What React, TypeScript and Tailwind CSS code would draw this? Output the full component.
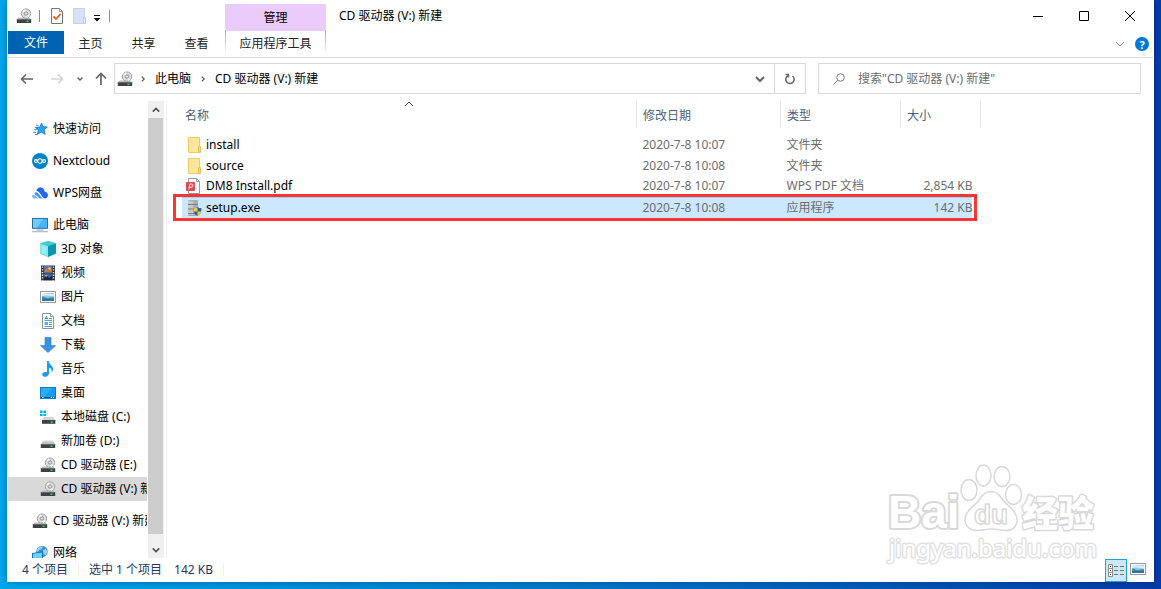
import React from 'react';

type IconProps = { className?: string };

const DriveBody = () => (
  <>
    <path d="M2.5 9.5h11l1.7 2.2H.8z" fill="#b9bbbd" />
    <rect x="0.8" y="11.2" width="14.4" height="3.8" fill="#3e4246" />
    <rect x="0.8" y="11.2" width="14.4" height="0.8" fill="#6b6f73" />
    <rect x="10.5" y="12.6" width="2" height="1.4" fill="#3ee04a" />
  </>
);

const CdDrive = ({ className = '' }: IconProps) => (
  <svg viewBox="0 0 16 16" className={`size-4 shrink-0 ${className}`} aria-hidden="true">
    <DriveBody />
    <circle cx="10" cy="5.6" r="4.7" fill="#dcdee0" stroke="#979a9d" strokeWidth="0.9" />
    <path d="M10 5.6 6.4 3.2A4.3 4.3 0 0 1 9 1.5zM10 5.6l3.6 2.6a4.3 4.3 0 0 1-2.4 1.6z" fill="#f7f7f7" />
    <circle cx="10" cy="5.6" r="1.8" fill="#c4c7ca" stroke="#85888b" strokeWidth="0.7" />
    <circle cx="10" cy="5.6" r="0.7" fill="#fff" />
  </svg>
);

const HardDrive = () => (
  <svg viewBox="0 0 16 16" className="size-4 shrink-0" aria-hidden="true">
    <path d="M3.3 7.5h9.4l2.5 3.6H.8z" fill="#d3d5d7" />
    <DriveBody />
  </svg>
);

const SystemDrive = () => (
  <svg viewBox="0 0 16 16" className="size-4 shrink-0" aria-hidden="true">
    <path d="M0 1.6h2.6v2.3H0zM3.4 1.6H6v2.3H3.4zM0 4.7h2.6V7H0zM3.4 4.7H6V7H3.4z" fill="#00b7ee" />
    <path d="M4 8h9l2.4 3H2z" fill="#d3d5d7" />
    <rect x="2" y="11" width="13.4" height="3.8" fill="#3e4246" />
    <rect x="10.8" y="12.4" width="2" height="1.4" fill="#3ee04a" />
  </svg>
);

const QuickStar = () => (
  <svg viewBox="0 0 16 16" className="size-4 shrink-0" aria-hidden="true">
    <path d="m9.6 2 1.4 3.6 4.3.4-3.2 2.7 1.1 4.6-3.900-2.300-4.200 2.500L6.300 9.500 3.900 6.600l3.900-.6z" fill="#2ea3f0" stroke="#1576c4" strokeWidth="0.8" />
    <path d="M4 4.300h2.500M2.800 6.400h2M2 8.700h3M1 11.300h3M3 13.500h2" stroke="#1b83d6" strokeWidth="0.9" />
  </svg>
);

const NextcloudIcon = () => (
  <svg viewBox="0 0 16 16" className="size-4 shrink-0" aria-hidden="true">
    <circle cx="8" cy="8" r="8" fill="#0082c9" />
    <g fill="none" stroke="#fff" strokeWidth="1.1">
      <circle cx="8" cy="8" r="2.2" />
      <circle cx="3.9" cy="8" r="1.400" />
      <circle cx="12.1" cy="8" r="1.400" />
    </g>
  </svg>
);

const WpsCloud = () => (
  <svg viewBox="0 0 16 16" className="size-4 shrink-0" aria-hidden="true">
    <path d="M4.200 5.800C5 3.500 7 2.100 9 2.400c2.200.3 3.400 2 3.600 4 2 .3 3.400 1.800 3.400 3.600 0 2-1.400 3.400-3.200 3.400-2.800 0-4.200-6.700-8.600-7.600z" fill="#2468ee" />
    <path d="M3.700 7c3.400.7 4.400 4.600 6.800 6.400H7.700C6 12.200 4.600 10.500 2.400 9c.3-.8.800-1.600 1.300-2z" fill="#4b94fa" />
    <path d="M2 9.400c1.700.8 2.500 3 4.200 4H2.700C1.200 13.400 0 12.500 0 11.300c0-1 .9-1.700 2-1.900z" fill="#78b7ff" />
  </svg>
);

const Computer = () => (
  <svg viewBox="0 0 16 16" className="size-4 shrink-0" aria-hidden="true">
    <rect x="0.5" y="1.500" width="15" height="9.800" fill="#47b4fa" stroke="#306f9c" />
    <path d="M1 2h10L5 10.800H1z" fill="#71cafe" />
    <path d="M4.500 13h7" stroke="#8aa5b6" />
    <path d="M0 14.700h16" stroke="#9eb0bd" />
  </svg>
);

const Cube = () => (
  <svg viewBox="0 0 16 16" className="size-4 shrink-0" aria-hidden="true">
    <path d="m8 0 8 2.500v10L8 16l-8-3.500v-10z" fill="#27bdd0" />
    <path d="M0 2.500 8 5v11l-8-3.500z" fill="#89e5e9" />
    <path d="M16 2.500 8 5v11l8-3.500z" fill="#0897ac" />
    <path d="m8 0 8 2.500L8 5 0 2.500z" fill="#43cad7" />
    <path d="m2 4.500 4 1.200v7.500l-4-1.700z" fill="#a9f2ef" opacity="0.6" />
  </svg>
);

const Film = () => (
  <svg viewBox="0 0 16 16" className="size-4 shrink-0" aria-hidden="true">
    <rect x="1" y="0.500" width="14" height="15" fill="#34373b" />
    <rect x="4" y="1" width="8" height="6.500" fill="#5873b9" />
    <rect x="4" y="8.500" width="8" height="6.500" fill="#3563b7" />
    <path d="M5 5.500 7 3l2 2.500 1.500-2 1.500 2V7.500H4z" fill="#ca7936" />
    <circle cx="9.500" cy="3.500" r="1.300" fill="#f2ce3c" />
    <path d="m4 13 3-3 2 3 3-2v4H4z" fill="#152849" />
    <path d="M5 10h3l-2 2z" fill="#e5b943" />
    <path d="M2.500 1.500v14M13.500 1.500v14" stroke="#e9e9e9" strokeWidth="1.400" strokeDasharray="1.300 1.400" />
  </svg>
);

const Picture = ({ className = '' }: IconProps) => (
  <svg viewBox="0 0 16 16" className={`size-4 shrink-0 ${className}`} aria-hidden="true">
    <rect x="0.500" y="2.500" width="15" height="11" fill="#fff" stroke="#969b9f" />
    <rect x="2" y="4" width="12" height="8" fill="#8fc9f5" />
    <path d="m2 4 12 1v2.500L7 6.600 2 7z" fill="#d8efff" />
    <path d="M2 7.500c3 .3 3 1.500 6 1.500 2.500 0 3.500-.7 6-.7V12H2z" fill="#4b8c8c" />
    <path d="M2 10c4-.3 6 .7 12-.6V12H2z" fill="#2f73a5" />
  </svg>
);

const DocumentIcon = () => (
  <svg viewBox="0 0 16 16" className="size-4 shrink-0" aria-hidden="true">
    <path d="M2.500.500h8l3 3v12h-11z" fill="#fff" stroke="#8d9499" />
    <path d="M10.500.500v3h3" fill="#e5e8eb" stroke="#8d9499" />
    <path d="m4.800 6.500 1.500-3.200 1.500 3.200M5.300 5.500h2" fill="none" stroke="#2689d2" strokeWidth="0.900" />
    <path d="M9 5.500h3M4.500 7.500H12M9 9.500h3M9 11.500h3M4.500 13.500H12" stroke="#3f97d3" strokeWidth="0.900" />
    <path d="M4.500 9h3.500v3H4.500z" fill="#66afe0" />
  </svg>
);

const Download = () => (
  <svg viewBox="0 0 16 16" className="size-4 shrink-0" aria-hidden="true">
    <path d="M5 .500h6v8h4.500L8 15.500.500 8.500H5z" fill="#3a92e3" stroke="#2579c8" strokeWidth="0.600" />
  </svg>
);

const Music = () => (
  <svg viewBox="0 0 16 16" className="size-4 shrink-0" aria-hidden="true">
    <path d="M7 0h1.800c0 3.500 4.200 4.200 4.200 8 0 1.400-.6 2.600-1.500 3.700.6-3-.7-4.600-2.500-5.200V12c0 2-1.500 3.700-3.700 3.700-1.800 0-3.100-.9-3.100-2.300 0-1.600 1.800-2.900 4.800-2.400z" fill="#159bf0" />
  </svg>
);

const Desktop = () => (
  <svg viewBox="0 0 16 16" className="size-4 shrink-0" aria-hidden="true">
    <rect x="0.500" y="2.500" width="15" height="11" fill="#169cf5" stroke="#1378c5" />
    <path d="M1 3h11L4 12H1z" fill="#2eacfc" />
    <path d="M1 12.500h14" stroke="#0865a7" />
    <path d="M2 12.500h1.500M11 12.500h1M13 12.500h1" stroke="#fff" />
  </svg>
);

const Network = () => (
  <svg viewBox="0 0 16 16" className="size-4 shrink-0" aria-hidden="true">
    <circle cx="10" cy="6.500" r="5.700" fill="#398fc7" />
    <path d="M6 3c2-2.500 5-2 5-1L9.500 4 7 5l-1 2-1.500-.8zM11 5l3-1 1.500 2.500-2 4-2-1.500z" fill="#91d4f2" />
    <path d="m0 8 11-1.500V15L0 14z" fill="#0878bd" />
    <path d="m1 8.800 9-1.200v6.300l-9-.8z" fill="#6ccfff" />
  </svg>
);

const Folder = () => (
  <svg viewBox="0 0 16 16" className="size-4 shrink-0" aria-hidden="true">
    <path d="M2.500.500h11v15h-11z" fill="#ffe69a" stroke="#edcb62" />
    <path d="M12.500 9.500h2v6h-2z" fill="#fbd873" stroke="#e2b94c" strokeWidth="0.800" />
  </svg>
);

const Pdf = () => (
  <svg viewBox="0 0 16 16" className="size-4 shrink-0" aria-hidden="true">
    <path d="M2.500.500h8l3 3v12h-11z" fill="#fff" stroke="#999" />
    <path d="M10.500.500v3h3" fill="none" stroke="#999" />
    <rect x="0" y="4" width="9" height="9" rx="1" fill="#e14850" />
    <path d="M3 11.500 3.800 6h1.700c2.200 0 1.800 3.200-.3 3.200H3.500" fill="none" stroke="#fff" strokeWidth="1" />
  </svg>
);

const Setup = () => (
  <svg viewBox="0 0 16 16" className="size-4 shrink-0" aria-hidden="true">
    <rect x="2" y="0" width="10" height="16" rx="1" fill="#a9adb0" />
    <path d="M2 1h5v14H2z" fill="#c6c9cb" />
    <path d="M2 4.500h10M2 9h10M2 13.500h10" stroke="#7b8084" strokeWidth="1.200" />
    <path d="M11.500 7c1.200.8 2.400 1.200 4 1.200 0 3.800-1.100 6.300-4 7.600-2.900-1.300-4-3.800-4-7.600 1.600 0 2.800-.4 4-1.200z" fill="#1e65ba" />
    <path d="M11.500 7.600v3.800H7.800c-.3-.9-.4-1.800-.3-3.100 1.600 0 2.800-.3 4-.7zM11.500 11.400h3.700c-.5 2-1.700 3.500-3.700 4.400z" fill="#fbc72c" />
  </svg>
);

const Chevron = ({ className = 'size-[10px]' }: IconProps) => (
  <svg viewBox="0 0 10 10" className={`shrink-0 ${className}`} fill="none" stroke="currentColor" aria-hidden="true">
    <path d="m1 3 4 4 4-4" />
  </svg>
);

type NavItem = { label: string; icon: React.ReactNode; child?: boolean; gap?: boolean; active?: boolean };

const navItems: NavItem[] = [
  { label: '快速访问', icon: <QuickStar /> },
  { label: 'Nextcloud', icon: <NextcloudIcon />, gap: true },
  { label: 'WPS网盘', icon: <WpsCloud />, gap: true },
  { label: '此电脑', icon: <Computer />, gap: true },
  { label: '3D 对象', icon: <Cube />, child: true },
  { label: '视频', icon: <Film />, child: true },
  { label: '图片', icon: <Picture />, child: true },
  { label: '文档', icon: <DocumentIcon />, child: true },
  { label: '下载', icon: <Download />, child: true },
  { label: '音乐', icon: <Music />, child: true },
  { label: '桌面', icon: <Desktop />, child: true },
  { label: '本地磁盘 (C:)', icon: <SystemDrive />, child: true },
  { label: '新加卷 (D:)', icon: <HardDrive />, child: true },
  { label: 'CD 驱动器 (E:)', icon: <CdDrive />, child: true },
  { label: 'CD 驱动器 (V:) 新建', icon: <CdDrive />, child: true, active: true },
  { label: 'CD 驱动器 (V:) 新建', icon: <CdDrive />, gap: true },
  { label: '网络', icon: <Network />, gap: true },
];

const files = [
  { name: 'install', date: '2020-7-8 10:07', type: '文件夹', size: '', icon: <Folder /> },
  { name: 'source', date: '2020-7-8 10:08', type: '文件夹', size: '', icon: <Folder /> },
  { name: 'DM8 Install.pdf', date: '2020-7-8 10:07', type: 'WPS PDF 文档', size: '2,854 KB', icon: <Pdf /> },
  { name: 'setup.exe', date: '2020-7-8 10:08', type: '应用程序', size: '142 KB', icon: <Setup />, selected: true },
];

const TitleBar = () => (
  <header className="flex h-[31px] shrink-0">
    <div className="flex w-[217px] shrink-0 items-center pl-2">
      <CdDrive />
      <span className="ml-[7px] h-3 w-px bg-[#8b8b8b]" />
      <button aria-label="属性" className="ml-[10px]">
        <svg viewBox="0 0 14 16" className="h-4 w-[14px]" aria-hidden="true">
          <path d="M1.500.500h8l3 3v12h-11z" fill="#fff" stroke="#777" />
          <path d="M9.500.500v3h3" fill="none" stroke="#999" />
          <path d="m3.500 8.500 2.500 2.500 4.500-5" fill="none" stroke="#ea5a20" strokeWidth="1.800" />
        </svg>
      </button>
      <button aria-label="新建文件夹" className="ml-2">
        <svg viewBox="0 0 14 16" className="h-4 w-[14px]" aria-hidden="true">
          <path d="M1.500.500h11v15h-11z" fill="#d5e3f4" stroke="#c2d4ea" />
          <path d="M11.500 9.500h2v6h-2z" fill="#deeaf8" stroke="#b9cee7" />
        </svg>
      </button>
      <button aria-label="自定义快速访问工具栏" className="ml-[7px] mt-1">
        <svg viewBox="0 0 8 8" className="size-2" aria-hidden="true">
          <path d="M1 1.500h6" stroke="#111" />
          <path d="M.500 4h7l-3.500 3.500z" fill="#111" />
        </svg>
      </button>
      <span className="ml-2 h-3 w-px bg-[#8b8b8b]" />
    </div>
    <div className="mt-1 flex w-[101px] shrink-0 items-center justify-center bg-[#eacbfc]">管理</div>
    <h1 className="ml-[13px] flex flex-1 items-center">CD 驱动器 (V:) 新建</h1>
    <div className="flex shrink-0">
      <button aria-label="最小化" className="grid w-[46px] place-items-center">
        <svg viewBox="0 0 12 12" className="size-3" stroke="#000" fill="none" aria-hidden="true"><path d="M1 6.500h10" /></svg>
      </button>
      <button aria-label="最大化" className="grid w-[46px] place-items-center">
        <svg viewBox="0 0 12 12" className="size-3" stroke="#000" fill="none" aria-hidden="true"><path d="M1.500 1.500h9v9h-9z" /></svg>
      </button>
      <button aria-label="关闭" className="grid w-[46px] place-items-center">
        <svg viewBox="0 0 12 12" className="size-3" stroke="#000" fill="none" aria-hidden="true"><path d="m1 1 10 10M11 1 1 11" /></svg>
      </button>
    </div>
  </header>
);

const Ribbon = () => (
  <div className="flex h-[27px] shrink-0 items-start border-b border-[#dadbdc] text-[#222]">
    <button className="h-[23px] w-14 bg-[#0063b1] pt-px text-white">文件</button>
    <button className="h-[25px] w-[53px]">主页</button>
    <button className="h-[25px] w-[53px]">共享</button>
    <button className="h-[25px] w-[53px]">查看</button>
    <div className="ml-0.5 flex w-[101px]">
      <span className="h-5 w-px bg-linear-to-b from-[#aaa] to-[#eee]" />
      <button className="h-[25px] flex-1">应用程序工具</button>
      <span className="h-5 w-px bg-linear-to-b from-[#aaa] to-[#eee]" />
    </div>
    <button aria-label="展开功能区" className="mt-2 ml-auto text-[#888]"><Chevron /></button>
    <button aria-label="帮助" className="mt-1.5 mr-1 ml-[10px] grid size-[14px] place-items-center rounded-full bg-[#0078d7] text-[11px] leading-none font-bold text-white">?</button>
  </div>
);

const AddressRow = () => (
  <div className="flex h-[43px] shrink-0 pt-[5px] pb-[7px]">
    <div className="flex w-[106px] shrink-0 items-center text-[#666]">
      <button aria-label="后退" className="ml-3">
        <svg viewBox="0 0 14 14" className="size-[14px]" fill="none" stroke="currentColor" strokeWidth="1.600" aria-hidden="true"><path d="M13 7H1.500M6 2.500 1.500 7 6 11.500" /></svg>
      </button>
      <button aria-label="前进" className="ml-4 text-[#d3d3d3]">
        <svg viewBox="0 0 14 14" className="size-[14px]" fill="none" stroke="currentColor" strokeWidth="1.500" aria-hidden="true"><path d="M1 7h11.500M8 2.500l4.500 4.500L8 11.500" /></svg>
      </button>
      <button aria-label="最近浏览的位置" className="ml-3">
        <svg viewBox="0 0 8 8" className="size-2" fill="none" stroke="currentColor" strokeWidth="1.500" aria-hidden="true"><path d="m1.500 2.500 2.500 2.500 2.500-2.500" /></svg>
      </button>
      <button aria-label="上移" className="ml-[10px]">
        <svg viewBox="0 0 14 14" className="size-[14px]" fill="none" stroke="currentColor" strokeWidth="1.700" aria-hidden="true"><path d="M7 13V1.500M2 6.500l5-5 5 5" /></svg>
      </button>
    </div>
    <div className="flex min-w-0 flex-1 items-center border border-[#d9d9d9] pl-0.5">
      <CdDrive />
      <Chevron className="ml-[7px] size-1.5 -rotate-90 stroke-2 text-[#555]" />
      <button className="ml-[9px] leading-4">此电脑</button>
      <Chevron className="ml-[9px] size-1.5 -rotate-90 stroke-2 text-[#555]" />
      <button className="ml-[9px]">CD 驱动器 (V:) 新建</button>
      <button aria-label="以前的位置" className="mr-[9px] ml-auto text-[#666]"><Chevron className="size-[10px] stroke-2" /></button>
      <button aria-label="刷新" className="grid w-[31px] place-items-center self-stretch border-l border-[#d9d9d9] text-[#666]">
        <svg viewBox="0 0 12 12" className="size-3" fill="none" stroke="currentColor" strokeWidth="1.500" aria-hidden="true">
          <path d="M8.500 3a4.200 4.200 0 1 1-4.800-.2M1.500 1.500h3v3" />
        </svg>
      </button>
    </div>
    <label className="mr-3 ml-3 flex w-[323px] items-center border border-[#d9d9d9] pl-3.5">
      <svg viewBox="0 0 12 12" className="size-3 shrink-0" fill="none" stroke="#777" aria-hidden="true">
        <circle cx="7.500" cy="4.500" r="3.800" /><path d="M4.800 7.200.500 11.500" />
      </svg>
      <input type="search" aria-label="搜索" placeholder={'搜索"CD 驱动器 (V:) 新建"'} className="ml-[13px] min-w-0 flex-1 outline-none placeholder:text-[#6d6d6d]" />
    </label>
  </div>
);

const Sidebar = () => (
  <aside className="flex w-[159px] shrink-0 border-r border-[#f0f0f0]">
    <nav aria-label="导航窗格" className="w-[139px] overflow-hidden pt-4">
      <ul>
        {navItems.map((item, i) => (
          <li key={i} className={item.gap ? 'mt-2' : ''}>
            <a href="#" className={`flex h-6 items-center gap-[5px] whitespace-nowrap ${item.child ? 'pl-8' : 'pl-6'} ${item.active ? 'bg-[#d9d9d9]' : ''}`}>
              {item.icon}
              {item.label}
            </a>
          </li>
        ))}
      </ul>
    </nav>
    <div className="ml-px flex w-4 flex-col bg-[#f0f0f0] text-[#505050]">
      <button aria-label="向上滚动" className="grid h-[17px] place-items-center"><Chevron className="size-2 rotate-180 stroke-2" /></button>
      <div className="mr-px flex-1 bg-[#cdcdcd]" />
      <button aria-label="向下滚动" className="grid h-6 justify-items-center pt-3"><Chevron className="size-2 stroke-2" /></button>
    </div>
  </aside>
);

const FileList = () => (
  <main className="relative min-w-0 flex-1 pl-[15px]">
    <table className="w-[799px] table-fixed border-collapse text-left">
      <colgroup>
        <col />
        <col className="w-[144px]" />
        <col className="w-[120px]" />
        <col className="w-[72px]" />
        <col className="w-2" />
      </colgroup>
      <thead className="text-[#4c607a]">
        <tr className="h-[26px]">
          <th className="relative border-r border-[#e5e5e5] pt-1 pl-[3px] font-normal">
            名称
            <Chevron className="absolute -top-0.5 left-1/2 size-[10px] -translate-x-1/2 rotate-180 text-[#444]" />
          </th>
          <th className="border-r border-[#e5e5e5] pt-1 pl-1.5 font-normal">修改日期</th>
          <th className="border-r border-[#e5e5e5] pt-1 pl-1.5 font-normal">类型</th>
          <th colSpan={2} className="border-r border-[#e5e5e5] pt-1 pl-1.5 font-normal">大小</th>
        </tr>
      </thead>
      <tbody className="text-[#6d6d6d]">
        <tr className="h-[7px]"><td colSpan={5} /></tr>
        {files.map((file) => {
          const fill = file.selected ? 'bg-[#cce8ff] border-t border-[#99d1ff]' : '';
          return (
            <tr key={file.name} className="relative h-[21px]">
              <td className={`p-0 pl-1 ${fill}`}>
                <a href="#" className="flex h-5 items-center gap-1 text-black">{file.icon}{file.name}</a>
                {file.selected && <span className="pointer-events-none absolute -top-[3px] right-1 -bottom-[3px] -left-[9px] border-3 border-[#fc3434]" />}
              </td>
              <td className={`py-0 pl-1.5 ${fill}`}>{file.date}</td>
              <td className={`py-0 pl-1.5 ${fill}`}>{file.type}</td>
              <td className={`p-0 text-right whitespace-nowrap ${fill}`}>{file.size}</td>
              <td className="p-0" />
            </tr>
          );
        })}
      </tbody>
    </table>
    <svg viewBox="0 0 216 104" className="pointer-events-none absolute right-[52px] -bottom-2 h-[104px] w-[216px]" fill="#fff" stroke="#d9d9d9" strokeWidth="1.500" strokeLinejoin="round" role="img" aria-label="Baidu 经验 jingyan.baidu.com">
      <text x="3" y="66" fontFamily="Liberation Sans, sans-serif" fontWeight="700" fontSize="46" strokeWidth="4" paintOrder="stroke">Bai</text>
      <ellipse cx="84" cy="28" rx="8" ry="10.500" />
      <ellipse cx="98.500" cy="13.500" rx="7.500" ry="10.500" />
      <ellipse cx="117" cy="14.500" rx="8" ry="10" />
      <ellipse cx="128.500" cy="32.500" rx="8" ry="10" />
      <path d="M106 29.500c6 0 9 4 12 8.500 4 6 14 10 14 20 0 7-5 11-12 10.500-5-.4-9-1.500-14-1.500s-9 1.500-14 1.500c-7 0-12-4-12-11 0-9 10-13 14-19.500 3-5 6-8.500 12-8.500z" />
      <text x="89" y="62" fontFamily="Liberation Sans, sans-serif" fontWeight="700" fontSize="28">du</text>
      <text x="137" y="65" fontFamily="Noto Sans CJK SC, sans-serif" fontWeight="900" fontSize="36" strokeWidth="3" paintOrder="stroke">经验</text>
      <text x="4" y="95" fontFamily="Noto Sans, sans-serif" fontSize="24" stroke="#e2e2e2" strokeWidth="3" paintOrder="stroke">jingyan.baidu.com</text>
    </svg>
  </main>
);

const StatusBar = () => (
  <footer className="flex h-6 shrink-0 items-center pr-[7px] pl-3.5 text-[#1e395b]">
    <span>4 个项目</span>
    <span className="mx-[10px] h-3 w-px bg-[#eee]" />
    <span>选中 1 个项目</span>
    <span className="ml-3">142 KB</span>
    <span className="ml-[10px] h-3 w-px bg-[#eee]" />
    <button aria-label="详细信息" className="ml-auto grid h-[23px] w-[22px] place-items-center border border-[#26a0da] bg-[#cbe8f6]">
      <svg viewBox="0 0 16 14" className="h-[14px] w-4" fill="none" aria-hidden="true">
        <path d="M.500 1.500h4v4h-4zM.500 5.500h4v4h-4zM.500 9.500h4v4h-4z" fill="#fff" stroke="#8c8c8c" />
        <path d="M2 3.500h1M2 7.500h1M2 11.500h1" stroke="#333" />
        <path d="M6 3.500h4M12 3.500h4M6 7.500h4M12 7.500h4M6 11.500h4M12 11.500h4" stroke="#777" />
      </svg>
    </button>
    <button aria-label="大图标" className="-mt-0.5 ml-[3px]"><Picture /></button>
  </footer>
);

export default function App() {
  return (
    <div
      className="flex h-screen bg-linear-to-r from-[#00a5ec] via-[#0377cb] to-[#053ca9] px-[7px] pb-[7px] text-[12px] leading-4 text-black"
      style={{ fontFamily: '"Noto Sans", "Noto Sans CJK SC", sans-serif' }}
    >
      <div className="flex min-w-0 flex-1 flex-col bg-white px-px shadow-[0_0_6px_rgba(0,0,0,0.35)]">
        <TitleBar />
        <Ribbon />
        <AddressRow />
        <div className="flex min-h-0 flex-1">
          <Sidebar />
          <FileList />
        </div>
        <StatusBar />
      </div>
    </div>
  );
}
